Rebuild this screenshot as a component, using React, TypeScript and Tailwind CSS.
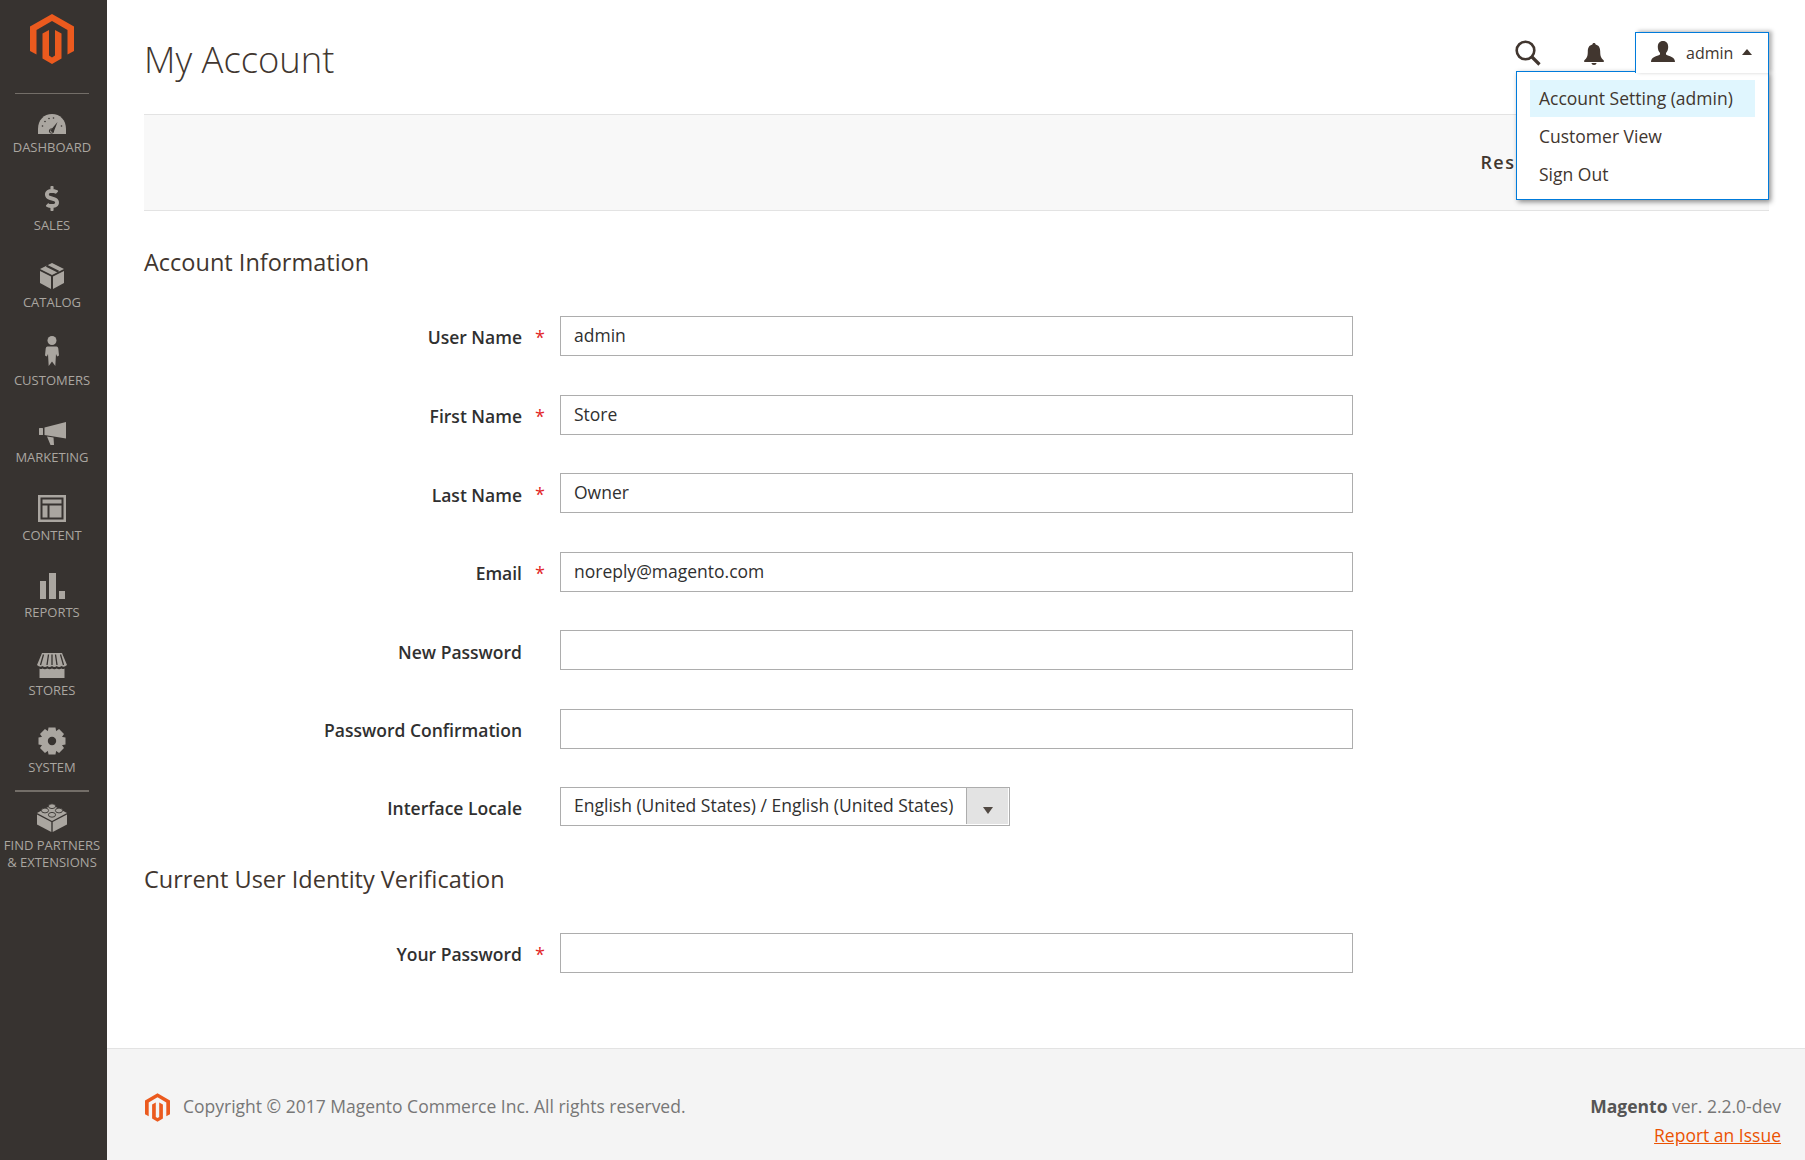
import React from "react";
import { FaDollarSign } from "react-icons/fa";

const C = "#aaa6a0";
const BG = "#373330";

function Logo({ className }: { className: string }) {
  return (
    <svg viewBox="0 0 44 50" className={className} fill="#eb5a1e">
      <path d="M22 0L44 12.5V37L37.5 40.5V16L22 7L6.5 16V40.5L0 37V12.5Z" />
      <path d="M12.5 19.5L19 16V41.5L22 43.5L25 41.5V16L31.5 19.5V44.5L22 50L12.5 44.5Z" />
    </svg>
  );
}

function Dashboard() {
  return (
    <svg viewBox="0 0 28 20" className="w-[28px] h-[20px]">
      <path d="M0 20V15C0 6 6 0 14 0S28 6 28 15V20Z" fill={C} />
      <path d="M12 17L19.5 8L15.5 18.5Z" fill={BG} />
      <circle cx="13.5" cy="17" r="2.2" fill="none" stroke={BG} strokeWidth="1" />
      <g fill={BG}>
        <circle cx="4.5" cy="12" r="0.8" />
        <circle cx="7" cy="7.5" r="0.8" />
        <circle cx="11" cy="4.5" r="0.8" />
        <circle cx="15.5" cy="4" r="0.8" />
        <circle cx="23.5" cy="12" r="0.8" />
      </g>
    </svg>
  );
}
function Catalog() {
  return (
    <svg viewBox="0 0 24 26" className="w-[24px] h-[26px]" fill={C}>
      <path d="M12 0L24 6L12 12L0 6Z" />
      <path d="M6.5 2.7L18.5 8.7" stroke={BG} strokeWidth="2.2" />
      <path d="M0 8L11 13.5V26L0 20Z" />
      <path d="M13 13.5L24 8V20L13 26Z" />
    </svg>
  );
}
function Customers() {
  return (
    <svg viewBox="0 0 14 30" className="w-[14px] h-[30px] -translate-y-[1px]" fill={C}>
      <circle cx="7" cy="4.5" r="4.5" />
      <path d="M2.5 10.5H11.5Q13 10.5 13.3 12.5L14 19.5L12.2 20.5L11 18L10.3 30L7 25.5L3.7 30L3 18L1.8 20.5L0 19.5L.7 12.5Q1 10.5 2.5 10.5Z" />
    </svg>
  );
}
function Marketing() {
  return (
    <svg viewBox="0 0 27 23" className="w-[27px] h-[23px] translate-y-[1px]" fill={C}>
      <rect x="0" y="6" width="4" height="7" rx="0.5" />
      <path d="M5.5 5.5L27 0V16.5L5.5 13Z" />
      <path d="M8 14.5L14.5 15.5L15 23L11.5 23Z" />
    </svg>
  );
}
function Content() {
  return (
    <svg viewBox="0 0 28 27" className="w-[28px] h-[27px]" fill={C}>
      <path d="M0 0H28V27H0ZM2.5 2.5V24.5H25.5V2.5Z" fillRule="evenodd" />
      <rect x="4.5" y="4.5" width="19" height="4" />
      <rect x="4.5" y="10.5" width="5" height="12" />
      <rect x="11.5" y="10.5" width="12" height="12" />
    </svg>
  );
}
function Reports() {
  return (
    <svg viewBox="0 0 25 26" className="w-[25px] h-[26px]" fill={C}>
      <rect x="0" y="8" width="6" height="18" />
      <rect x="9" y="0" width="7" height="26" />
      <rect x="19" y="18" width="6" height="8" />
    </svg>
  );
}
function Stores() {
  return (
    <svg viewBox="0 0 30 25" className="w-[30px] h-[25px] translate-y-[1px]" fill={C}>
      <path d="M5 0H25L30 12Q27 15 24.5 13Q22 15 19.7 13Q17.5 15 15 13Q12.5 15 10.3 13Q8 15 5.5 13Q3 15 0 12Z" />
      <path d="M2.5 15.5Q4 16.5 5.5 15.5Q8 17 10.3 15.5Q12.5 17 15 15.5Q17.5 17 19.7 15.5Q22 17 24.5 15.5Q26 16.5 27.5 15.5V25H2.5Z" />
      <g stroke={BG} strokeWidth="1.3">
        <path d="M6.5 1.5L3.5 12" />
        <path d="M11.5 1.5L10 12" />
        <path d="M15 1.5V12" />
        <path d="M18.5 1.5L20 12" />
        <path d="M23.5 1.5L26.5 12" />
      </g>
    </svg>
  );
}
function System() {
  const a = [0, 45, 90, 135, 180, 225, 270, 315];
  return (
    <svg viewBox="0 0 28 28" className="w-[28px] h-[28px] translate-y-[1px]">
      <circle cx="14" cy="14" r="10.5" fill={C} />
      {a.map((d) => (
        <path key={d} d="M10.5 0.5H17.5L18.5 6H9.5Z" fill={C} transform={`rotate(${d} 14 14)`} />
      ))}
      <circle cx="14" cy="14" r="4.2" fill={BG} />
    </svg>
  );
}
function Partners() {
  return (
    <svg viewBox="0 0 30 29" className="w-[30px] h-[29px]">
      <path d="M15 2L30 10L15 18L0 10Z" fill={C} />
      <path d="M0 11.5L14.3 19V29L0 21.5Z" fill={C} />
      <path d="M15.7 19L30 11.5V21.5L15.7 29Z" fill={C} />
      <g fill={C} stroke={BG} strokeWidth="0.9">
        <ellipse cx="15" cy="3.2" rx="3.6" ry="2.4" />
        <ellipse cx="8" cy="7.5" rx="3.6" ry="2.4" />
        <ellipse cx="22" cy="7.5" rx="3.6" ry="2.4" />
        <ellipse cx="15" cy="11.8" rx="3.6" ry="2.4" />
      </g>
    </svg>
  );
}

function NavItem({ icon, label }: { icon: React.ReactNode; label: React.ReactNode }) {
  return (
    <div className="h-[77.5px] flex flex-col items-center">
      <div className="h-[36px] flex items-end justify-center">{icon}</div>
      <div className="mt-[5px] text-[13px] leading-[17px] uppercase text-center whitespace-nowrap text-[#aaa6a0]">
        {label}
      </div>
    </div>
  );
}

function Row({
  label,
  req,
  value,
}: {
  label: string;
  req?: boolean;
  value?: string;
}) {
  return (
    <div className="flex items-center h-[40px] mb-[38.6px]">
      <label className="w-[378px] text-right text-[17.5px] font-semibold text-[#303030] pt-[3px]">{label}</label>
      <span className="w-[38px] pl-[13px] text-[18px] text-[#e22626] pt-[3px]">{req ? "*" : ""}</span>
      <div className="w-[793px] h-[40px] border border-[#adadad] bg-white px-[13px] text-[17.5px] leading-[37px] text-[#303030]">
        {value}
      </div>
    </div>
  );
}

export default function App() {
  return (
    <div
      className="flex min-h-[1160px] w-full bg-white text-[#41362f]"
      style={{ fontFamily: '"Open Sans", "Noto Sans", sans-serif' }}
    >
      <aside className="w-[107px] shrink-0 bg-[#373330] flex flex-col pr-[3px]">
        <div className="pt-[14px] flex justify-center">
          <Logo className="w-[44px] h-[50px]" />
        </div>
        <div className="mx-[15px] mt-[29px] h-px bg-[#736e68]" />
        <div className="mt-[4px] flex flex-col">
          <NavItem icon={<Dashboard />} label="Dashboard" />
          <NavItem icon={<FaDollarSign className="w-[16px] h-[25px] text-[#aaa6a0] mb-[1px]" />} label="Sales" />
          <NavItem icon={<Catalog />} label="Catalog" />
          <NavItem icon={<Customers />} label="Customers" />
          <NavItem icon={<Marketing />} label="Marketing" />
          <NavItem icon={<Content />} label="Content" />
          <NavItem icon={<Reports />} label="Reports" />
          <NavItem icon={<Stores />} label="Stores" />
          <NavItem icon={<System />} label="System" />
        </div>
        <div className="mx-[15px] -mt-[6px] h-[2px] bg-[#736e68]" />
        <div className="flex flex-col items-center mt-[11px]">
          <Partners />
          <div className="mt-[5px] text-[13px] leading-[17.5px] uppercase text-center whitespace-nowrap text-[#aaa6a0]">
            Find Partners
            <br />
            &amp; Extensions
          </div>
        </div>
      </aside>

      <main className="flex-1 flex flex-col min-w-0">
        <div className="flex-1 pl-[37px] pr-[36px]">
          <header className="h-[114px] flex justify-between items-start">
            <h1 className="mt-[35px] text-[36.4px] leading-[48px] font-light text-[#41362f]">My Account</h1>
            <div className="flex items-start mt-[32px]">
              <svg viewBox="0 0 26 26" className="w-[26px] h-[26px] mt-[8px] mr-[43px]" fill="none" stroke="#41362f">
                <circle cx="10.5" cy="10.5" r="8.8" strokeWidth="2.6" />
                <path d="M17 17L24.5 24.5" strokeWidth="3.2" />
              </svg>
              <svg viewBox="0 0 20 22" className="w-[20px] h-[22px] mt-[11px] mr-[31px]" fill="#41362f">
                <path d="M10 0C11 0 11.6 .7 11.6 1.6C15 2.4 16.2 5 16.2 8.5C16.2 13 17 15 19.8 17.5V19H.2V17.5C3 15 3.8 13 3.8 8.5C3.8 5 5 2.4 8.4 1.6C8.4 .7 9 0 10 0Z" />
                <path d="M7.5 20H12.5C12.5 21.3 11.4 22 10 22S7.5 21.3 7.5 20Z" />
              </svg>
              <div className="relative w-[134px] h-[40px]">
                <div className="relative z-20 h-[41px] bg-white border-x border-t border-[#007bdb] shadow-[3px_-1px_4px_rgba(0,0,0,0.3)] flex items-center pl-[15px]">
                  <svg viewBox="0 0 24 21" className="w-[24px] h-[21px] mb-[3px]" fill="#41362f">
                    <path d="M12 0C15.5 0 17.2 2.5 17.2 6C17.2 8.5 16.3 10.5 15 12V13.5C18 15.5 24 15.5 24 21H0C0 15.5 6 15.5 9 13.5V12C7.7 10.5 6.8 8.5 6.8 6C6.8 2.5 8.5 0 12 0Z" />
                  </svg>
                  <span className="ml-[11px] text-[16px] leading-[22px] text-[#41362f] mb-[1px]">admin</span>
                  <svg viewBox="0 0 10 6" className="w-[10px] h-[6px] ml-[9px] mb-[2px]" fill="#41362f">
                    <path d="M5 0L10 6H0Z" />
                  </svg>
                </div>
                <div className="absolute z-10 right-0 top-[39px] w-[253px] h-[129px] bg-white border border-[#007bdb] shadow-[2px_2px_5px_rgba(0,0,0,0.45)] pt-[8px] px-[13px] text-[17.5px] text-[#41362f]">
                  <div className="h-[37px] leading-[36px] bg-[#e0f6fe] pl-[9px] whitespace-nowrap">Account Setting (admin)</div>
                  <div className="h-[38px] leading-[38px] pl-[9px]">Customer View</div>
                  <div className="h-[38px] leading-[38px] pl-[9px]">Sign Out</div>
                </div>
              </div>
            </div>
          </header>

          <div className="h-[97px] bg-[#f8f8f8] border-y border-[#e3e3e3] flex items-center justify-end">
            <span className="mr-[233px] text-[18px] font-semibold tracking-[1.5px] text-[#41362f]">Reset</span>
          </div>

          <h2 className="mt-[35px] text-[23.5px] leading-[33px] font-medium text-[#41362f]">Account Information</h2>
          <div className="mt-[37px]">
            <Row label="User Name" req value="admin" />
            <Row label="First Name" req value="Store" />
            <Row label="Last Name" req value="Owner" />
            <Row label="Email" req value="noreply@magento.com" />
            <Row label="New Password" />
            <Row label="Password Confirmation" />
            <div className="flex items-center h-[39px] -mt-px">
              <label className="w-[378px] text-right text-[17.5px] font-semibold text-[#303030] pt-[5px]">Interface Locale</label>
              <span className="w-[38px]" />
              <div className="w-[450px] h-[39px] border border-[#adadad] bg-white flex">
                <div className="flex-1 pl-[13px] text-[17.5px] leading-[35px] text-[#303030] whitespace-nowrap">
                  English (United States) / English (United States)
                </div>
                <div className="w-[42px] h-[36px] bg-[#e3e3e3] border-l border-[#adadad] flex items-center justify-center mr-px">
                  <svg viewBox="0 0 10 7" className="w-[10px] h-[7px] mt-[9px]" fill="#514943">
                    <path d="M0 0H10L5 7Z" />
                  </svg>
                </div>
              </div>
            </div>
          </div>

          <h2 className="mt-[37px] text-[23.5px] leading-[33px] font-medium text-[#41362f]">
            Current User Identity Verification
          </h2>
          <div className="mt-[37px]">
            <Row label="Your Password" req />
          </div>
        </div>

        <footer className="h-[112px] bg-[#f4f4f4] border-t border-[#e3e3e3] flex justify-between pl-[38px] pr-[24px] pt-[43px]">
          <div className="flex items-start">
            <Logo className="w-[25px] h-[29px] mt-[1px]" />
            <span className="ml-[13px] mt-[2px] text-[17.5px] leading-[24px] text-[#777777]">
              Copyright © 2017 Magento Commerce Inc. All rights reserved.
            </span>
          </div>
          <div className="text-right text-[17.5px] leading-[29px] text-[#777777]">
            <div className="h-[29px]">
              <span className="font-bold text-[#555555]">Magento</span> ver. 2.2.0-dev
            </div>
            <a className="text-[#eb5202] underline">Report an Issue</a>
          </div>
        </footer>
      </main>
    </div>
  );
}
